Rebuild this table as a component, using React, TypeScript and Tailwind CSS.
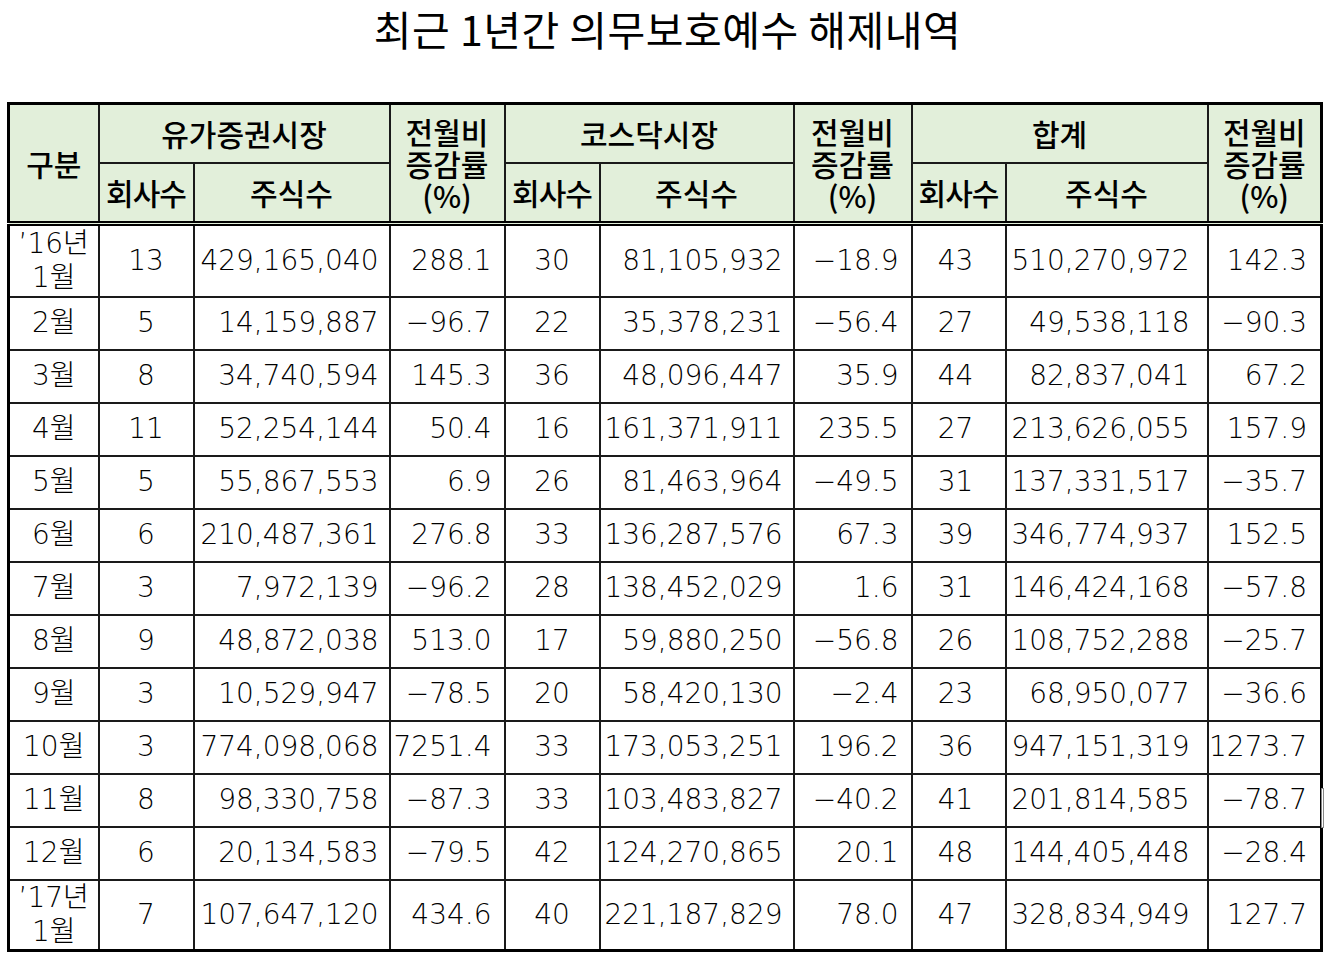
const rows: { label: string[]; cells: string[] }[] = [
  { label: ["\u201916년", "1월"], cells: ["13", "429,165,040", "288.1", "30", "81,105,932", "−18.9", "43", "510,270,972", "142.3"] },
  { label: ["2월"], cells: ["5", "14,159,887", "−96.7", "22", "35,378,231", "−56.4", "27", "49,538,118", "−90.3"] },
  { label: ["3월"], cells: ["8", "34,740,594", "145.3", "36", "48,096,447", "35.9", "44", "82,837,041", "67.2"] },
  { label: ["4월"], cells: ["11", "52,254,144", "50.4", "16", "161,371,911", "235.5", "27", "213,626,055", "157.9"] },
  { label: ["5월"], cells: ["5", "55,867,553", "6.9", "26", "81,463,964", "−49.5", "31", "137,331,517", "−35.7"] },
  { label: ["6월"], cells: ["6", "210,487,361", "276.8", "33", "136,287,576", "67.3", "39", "346,774,937", "152.5"] },
  { label: ["7월"], cells: ["3", "7,972,139", "−96.2", "28", "138,452,029", "1.6", "31", "146,424,168", "−57.8"] },
  { label: ["8월"], cells: ["9", "48,872,038", "513.0", "17", "59,880,250", "−56.8", "26", "108,752,288", "−25.7"] },
  { label: ["9월"], cells: ["3", "10,529,947", "−78.5", "20", "58,420,130", "−2.4", "23", "68,950,077", "−36.6"] },
  { label: ["10월"], cells: ["3", "774,098,068", "7251.4", "33", "173,053,251", "196.2", "36", "947,151,319", "1273.7"] },
  { label: ["11월"], cells: ["8", "98,330,758", "−87.3", "33", "103,483,827", "−40.2", "41", "201,814,585", "−78.7"] },
  { label: ["12월"], cells: ["6", "20,134,583", "−79.5", "42", "124,270,865", "20.1", "48", "144,405,448", "−28.4"] },
  { label: ["\u201917년", "1월"], cells: ["7", "107,647,120", "434.6", "40", "221,187,829", "78.0", "47", "328,834,949", "127.7"] },
];

// per data column: alignment + right padding
const cellCls = [
  "text-center",
  "text-right pr-[10px]",
  "text-right pr-[12px]",
  "text-center",
  "text-right pr-[10px]",
  "text-right pr-[12px]",
  "text-center pr-[6px]",
  "text-right pr-[17px]",
  "text-right pr-[13px]",
];

const head =
  "bg-[#e2efda] border-2 border-[#1a1a1a] p-0 text-center text-[30px] font-medium leading-[33px] text-black";
const body = "border-2 border-[#1a1a1a] p-0 text-[28px] font-extralight leading-none text-black whitespace-nowrap";
const split = " border-b-[5px] border-b-black border-double";

function RateHead() {
  return (
    <th rowSpan={2} className={head + split}>
      <div className="flex flex-col items-center leading-[32px]">
        <span>전월비</span>
        <span>증감률</span>
        <span>(%)</span>
      </div>
    </th>
  );
}

export default function App() {
  return (
    <div className="relative w-[1335px] h-[963px] bg-white font-['DejaVu_Sans','Noto_Sans_CJK_KR',sans-serif]">
      <h1 className="pt-[6px] text-center font-['Noto_Sans_CJK_KR',sans-serif] text-[41px] leading-[44px] tracking-[0.5px] text-black">
        최근 1년간 의무보호예수 해제내역
      </h1>

      <table className="mt-[52px] ml-[7px] w-[1313px] table-fixed border-collapse border-[3px] border-black">
        <colgroup>
          <col className="w-[90px]" />
          <col className="w-[95px]" />
          <col className="w-[196px]" />
          <col className="w-[115px]" />
          <col className="w-[95px]" />
          <col className="w-[194px]" />
          <col className="w-[118px]" />
          <col className="w-[94px]" />
          <col className="w-[202px]" />
          <col className="w-[114px]" />
        </colgroup>
        <thead className="font-['Noto_Sans_CJK_KR',sans-serif]">
          <tr className="h-[59px]">
            <th rowSpan={2} className={head + split}>구분</th>
            <th colSpan={2} className={head}>유가증권시장</th>
            <RateHead />
            <th colSpan={2} className={head}>코스닥시장</th>
            <RateHead />
            <th colSpan={2} className={head}>합계</th>
            <RateHead />
          </tr>
          <tr className="h-[61px]">
            {["회사수", "주식수", "회사수", "주식수", "회사수", "주식수"].map((t, i) => (
              <th key={i} className={head + split + (i % 2 === 0 ? " tracking-[-1px]" : "")}>
                {t}
              </th>
            ))}
          </tr>
        </thead>
        <tbody>
          {rows.map((r, ri) => (
            <tr key={ri} className={r.label.length > 1 ? (ri === 0 ? "h-[73px]" : "h-[69px]") : "h-[53px]"}>
              <td className={body + " text-center"}>
                {r.label.length > 1 ? (
                  <div className="flex flex-col items-center leading-[34px]">
                    <span>{r.label[0]}</span>
                    <span>{r.label[1]}</span>
                  </div>
                ) : (
                  r.label[0]
                )}
              </td>
              {r.cells.map((c, ci) => (
                <td key={ci} className={body + " " + cellCls[ci]}>
                  {c}
                </td>
              ))}
            </tr>
          ))}
        </tbody>
      </table>

      <div className="absolute left-[1321px] top-[788px] h-[40px] w-[3px] border border-[#888] bg-white" />
    </div>
  );
}
